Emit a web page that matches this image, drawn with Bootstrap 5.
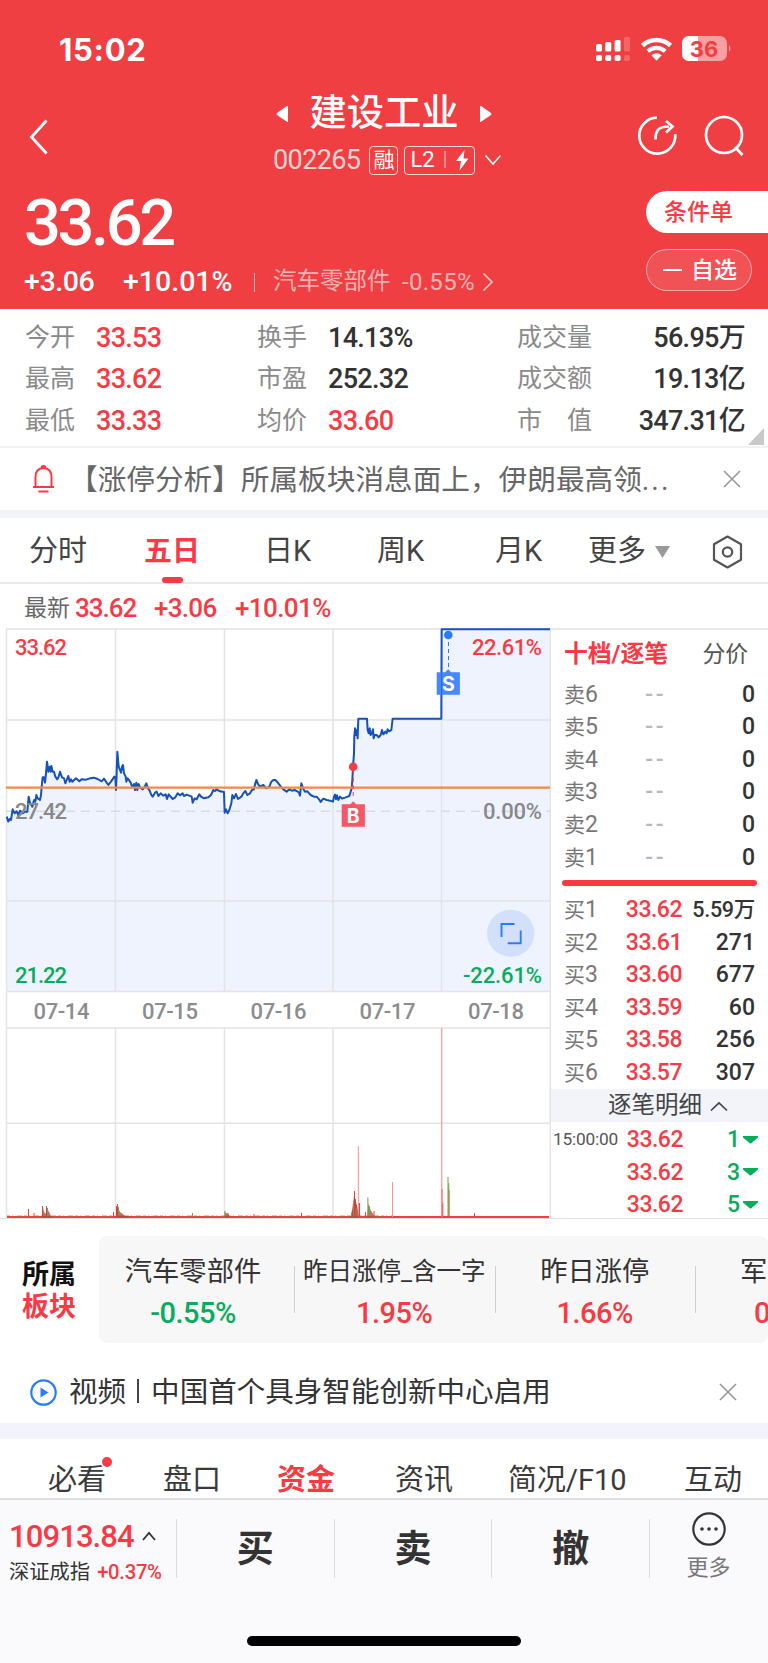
<!DOCTYPE html>
<html lang="zh-CN">
<head>
<meta charset="utf-8">
<meta name="viewport" content="width=device-width, initial-scale=1">
<title>建设工业 002265</title>
<link href="https://cdn.jsdelivr.net/npm/bootstrap@5.3.0/dist/css/bootstrap.min.css" rel="stylesheet">
<style>
  :root{--up:#f93a44;--down:#08ac5c;--ink:#333;--hero:#f03f42}
  body{width:768px;height:1663px;overflow:hidden;background:#fff;color:var(--ink);font-family:Roboto,"Noto Sans CJK SC",sans-serif;line-height:1}
  svg{display:block;flex:none}
  .up{color:var(--up)} .down{color:var(--down)}
  .nw{white-space:nowrap}
  .md{font-weight:500}
  /* header */
  .hero{background:var(--hero);color:#fff;height:309px}
  .status{height:90px;padding:8px 36px 0 59px}
  .clock{font:700 31px/1 Inter,sans-serif;letter-spacing:.7px}
  .titlebar{height:90px;display:grid;grid-template-columns:258px 1fr 258px}
  .stock{font-size:37.3px;font-weight:500}
  .code{font-size:27px;letter-spacing:-.6px;color:rgba(255,255,255,.78)}
  .tagbox{height:29px;border:1.5px solid rgba(255,255,255,.8);border-radius:4px}
  .price{font-size:65px;font-weight:500;letter-spacing:-3.4px;height:48px;line-height:48px;margin-top:19px;padding-left:24px}
  .change{height:30px;margin-top:20px;padding-left:24px}
  .pill-a{height:42px;width:122px;border-radius:21px 0 0 21px;background:#fff;font-size:23px;padding-left:18px}
  .pill-b{height:42px;width:106px;border:1px solid rgba(255,255,255,.5);background:rgba(255,255,255,.1);border-radius:21px;font-size:23px;padding-left:16px}
  .dim{color:rgba(255,255,255,.62)}
  /* statistics */
  .stats{height:139px;padding-top:9px;position:relative;border-bottom:2px solid #f0f1f3}
  .stat-row{height:41.3px;display:grid;grid-template-columns:71px 161px 71px 189px 110px 118px;padding-left:25px;align-items:center;font-size:27px}
  .stat-row span:nth-child(odd){font-size:25px;color:#8a8a8a;position:relative;top:-1px}
  .stat-row span:nth-child(even){font-weight:500;letter-spacing:-.7px}
  .stat-row span:last-child{text-align:right}
  .corner{position:absolute;right:4px;bottom:1px}
  .notice{height:62px;padding:0 27px 0 32px;color:#666}
  .band{background:#f2f4f9}
  .tabs{height:66px;display:grid;grid-template-columns:115px 120px 113px 118px 93px 67px 57px 55px;padding:3px 0 0 29px;align-items:center;font-size:29px;border-bottom:2px solid #eaeaea;color:#444}
  .tabs .on{position:relative;color:var(--up);font-weight:700;font-size:28px}
  .tabs .on::after{content:"";position:absolute;left:18px;top:39px;width:21px;height:6px;border-radius:3px;background:var(--up)}
  .latest{height:44px;padding:4px 0 0 24px;font-size:26px}
  /* chart and order book */
  .market{height:590px}
  .plot{width:551px}
  .book{width:217px;border-top:2px solid #eaeaea}
  .book-head{height:48px;padding:2px 20px 0 13px;font-size:22.8px}
  .book-head b{font-size:23.8px}
  .level{height:32.55px;display:grid;grid-template-columns:48px 70px 1fr;padding:0 13px;align-items:center;font-size:23px;font-weight:500}
  .level span:nth-child(1){color:#777;font-weight:400;font-size:21px}
  .level span:nth-child(1) b{font-weight:400;font-size:23px}
  .level span:nth-child(2){text-align:right;letter-spacing:-.5px}
  .level span:nth-child(3){text-align:right}
  .level .nil{color:#b3bac4;padding-right:16px;letter-spacing:2.5px!important}
  .sep{height:6px;margin:7px 11px 7px;border-radius:3px;background:var(--up)}
  .detail{height:33px;font-size:23.5px;background:#f2f4f9;color:#444}
  .tick{height:32.5px;display:grid;grid-template-columns:65px 65px 1fr 18px;padding:0 10px 0 2px;align-items:center;font-size:23px;font-weight:500}
  .tick span:nth-child(1){font-size:17.3px;font-weight:400;color:#555;letter-spacing:-.2px}
  .tick span:nth-child(2){text-align:right;letter-spacing:-.5px}
  /* sectors */
  .sectors{height:125px;padding-top:17px}
  .sec-title{width:99px;padding:5px 0 0 22px;font-size:27px;font-weight:700;line-height:32px}
  .sec-card{height:107px;width:669px;background:#f7f7f7;border-radius:8px;overflow:hidden;padding-top:21px}
  .sec{width:200.5px;flex:none;text-align:center;position:relative}
  .sec:first-child{width:195px;padding-right:7px}
  .sec + .sec::before{content:"";position:absolute;left:0;top:9px;height:47px;width:1px;background:#cfcfcf}
  .sec div{height:30px;line-height:30px;font-size:27.3px;white-space:nowrap}
  .sec div + div{margin-top:11px;font-size:29px;font-weight:500;letter-spacing:-.5px}
  .video{height:80px;padding:18px 31px 0 30px}
  .subnav{height:59px;display:grid;grid-template-columns:115px 114px 118px 113px 176px 80px;padding:23px 0 0 48px;font-size:29px;line-height:36px;color:#3a3a3a}
  .subnav .fresh{position:relative}
  .subnav .fresh::after{content:"";position:absolute;left:54px;top:-5px;width:10px;height:10px;border-radius:50%;background:var(--up)}
  .dock{height:165px;background:#fafafc;border-top:2px solid #dedede;position:relative}
  .dock-row{height:96px}
  .trade{width:157.7px;height:59px;border-left:1px solid #dcdcde;font-size:37px;font-weight:700;align-self:center}
  .trade span{position:relative;top:1px}
  .trade-more{width:118px;font-size:22px;font-weight:400;color:#777}
  .idx{width:176px;padding:22px 0 0 9px}
  .home{width:274px;height:10px;border-radius:5px;background:#000;margin:40px auto 0 247px}
</style>
</head>
<body>
<header class="hero">
  <div class="status d-flex align-items-center justify-content-between">
    <span class="clock">15:02</span>
    <div class="d-flex align-items-center">
      <svg width="34" height="26" viewBox="0 0 34 26" fill="#fff"><rect x="0" y="8" width="6" height="7.500" rx="1.500"/><rect x="9.300" y="6" width="6" height="9.500" rx="1.500"/><rect x="18.600" y="4" width="6" height="11.500" rx="1.500"/><rect x="28" y="1" width="6" height="14.500" rx="1.500" opacity=".2"/><rect x="0" y="19" width="6" height="6" rx="1.800"/><rect x="9.300" y="19" width="6" height="6" rx="1.800"/><rect x="18.600" y="19" width="6" height="6" rx="1.800"/><rect x="28" y="19" width="6" height="6" rx="1.800" opacity=".2"/></svg>
      <svg style="margin-left:10px" width="34" height="26" viewBox="0 0 34 26" fill="none" stroke="#fff"><path d="M2.500 9.500a20.500 20.500 0 0 1 28 0" stroke-width="4.600"/><path d="M7.800 15.200a13 13 0 0 1 17.400 0" stroke-width="4.200"/><path d="M11.400 19.200a8 8 0 0 1 10.200 0L16.500 24.800z" fill="#fff" stroke="none"/></svg>
      <svg class="ms-2" width="50" height="26" viewBox="0 0 50 26"><defs><clipPath id="bt"><rect y="0" width="45" height="25" rx="7"/></clipPath></defs><g clip-path="url(#bt)"><rect width="45" height="25" fill="#f8a0a1"/><rect width="16" height="25" fill="#fff"/></g><path d="M47 9q3 3.500 0 7z" fill="#f8a0a1"/><text x="22" y="20.500" font-family="Inter" font-weight="700" font-size="22" text-anchor="middle" fill="#f03f42">36</text></svg>
    </div>
  </div>
  <div class="titlebar">
    <div class="ps-4 pt-4"><svg class="mt-1" width="30" height="40" viewBox="-6 -4 30 40"><path d="M16.500 0L1.500 16.500l15 16.500" transform="translate(0 -1.500)" fill="none" stroke="#fff" stroke-width="2.800"/></svg></div>
    <div class="text-center">
      <div class="d-flex align-items-center justify-content-center" style="height:47px">
        <svg width="13" height="18"><path d="M12 1.500v15q0 1-1 .3L1 10q-1-1 0-2L11 1q1-.6 1 .5z" fill="#fff"/></svg>
        <span class="stock nw mx-3 px-1">建设工业</span>
        <svg width="13" height="18"><path d="M1 1.500v15q0 1 1 .3L12 10q1-1 0-2L2 1q-1-.6-1 .5z" fill="#fff"/></svg>
      </div>
      <div class="d-flex align-items-center" style="height:44px;padding:2px 0 0 15px">
        <span class="code">002265</span>
        <span class="tagbox d-flex align-items-center justify-content-center" style="width:29px;font-size:21px;margin-left:9px">融</span>
        <span class="tagbox d-flex align-items-center" style="width:71px;margin-left:6px;padding-left:5px;font-size:22px">L2
          <svg style="margin-left:9px" width="28" height="22"><path d="M1 2v17" stroke="#fff" opacity=".8"/><path d="M20.500 1L12 12h5l-1.500 9.500 9-12h-5z" fill="#fff"/></svg></span>
        <svg style="margin-left:9px" width="18" height="12"><path d="M1.500 1.500L9 10l7.500-8.500" fill="none" stroke="#fff" stroke-width="1.600"/></svg>
      </div>
    </div>
    <div class="d-flex" style="padding:25px 0 0 126px;gap:26px">
      <svg width="42" height="42" viewBox="0 0 42 42" fill="none" stroke="#fff" stroke-width="2.700"><path d="M21 2.600a18 18 0 1 0 18.200 16.500"/><path d="M19.500 24.500C19.500 14 24 11.500 33 11.500M30 6l6.500 5.500-6.500 6"/></svg>
      <svg width="42" height="42" viewBox="0 0 42 42" fill="none" stroke="#fff" stroke-width="2.700"><circle cx="20" cy="20" r="18"/><path d="M31 32l7.500 8"/></svg>
    </div>
  </div>
  <div class="d-flex justify-content-between">
    <div>
      <div class="price">33.62</div>
      <div class="change d-flex align-items-center nw">
        <span class="md" style="font-size:28.500px;letter-spacing:-.4px;width:99px">+3.06</span>
        <span class="md" style="font-size:28.500px;width:131px">+10.01%</span>
        <span style="width:19px;height:19px;border-left:1px solid rgba(255,255,255,.55)"></span>
        <span class="dim" style="font-size:23.500px;width:129px">汽车零部件</span>
        <span class="dim" style="font-size:24px;letter-spacing:.3px">-0.55%</span>
        <svg style="margin-left:7px" width="12" height="20"><path d="M1.500 1.500L10 10 1.500 18.500" fill="none" stroke="#fff" opacity=".7" stroke-width="1.700"/></svg>
      </div>
    </div>
    <div class="md" style="width:122px;padding-top:11px">
      <div class="pill-a up d-flex align-items-center">条件单</div>
      <div class="pill-b d-flex align-items-center" style="margin-top:16px"><i style="width:19px;height:2px;background:#fff;margin-right:9px"></i>自选</div>
    </div>
  </div>
</header>

<section class="stats">
  <div class="stat-row"><span>今开</span><span class="up">33.53</span><span>换手</span><span>14.13%</span><span>成交量</span><span>56.95万</span></div>
  <div class="stat-row"><span>最高</span><span class="up">33.62</span><span>市盈</span><span>252.32</span><span>成交额</span><span>19.13亿</span></div>
  <div class="stat-row"><span>最低</span><span class="up">33.33</span><span>均价</span><span class="up">33.60</span><span>市　值</span><span>347.31亿</span></div>
  <svg class="corner" width="16" height="17"><path d="M16 0v17H0z" fill="#c9c9c9"/></svg>
</section>

<section class="notice d-flex align-items-center">
  <svg width="23" height="28" viewBox="0 0 23 28" fill="none" stroke="#f93a44" stroke-width="2"><path d="M1 22h21M3.500 22V12q0-8.500 8-9 8 .5 8 9v10M9.500 3a2 2 0 0 1 4 0M6.500 26.500h10"/></svg>
  <span class="nw" style="font-size:28.650px;margin-left:14px;width:654px;padding-top:3px">【涨停分析】所属板块消息面上，伊朗最高领<span style="letter-spacing:2px">...</span></span>
  <svg width="18" height="18" stroke="#999" stroke-width="1.700"><path d="M1 1l16 16M17 1L1 17"/></svg>
</section>
<div class="band" style="height:8px"></div>

<nav class="tabs">
  <span>分时</span><span class="on">五日</span><span>日K</span><span>周K</span><span>月K</span><span>更多</span>
  <svg width="15" height="12"><path d="M0 0h15L7.500 12z" fill="#999"/></svg>
  <svg width="31" height="34" viewBox="0 0 31 34" fill="none" stroke="#555" stroke-width="2.200"><path d="M15.500 1.500L29 9.300v15.400l-13.500 7.800L2 24.700V9.300z" stroke-linejoin="round"/><circle cx="15.500" cy="17" r="4.700"/></svg>
</nav>
<div class="latest d-flex align-items-center md up nw">
  <span style="font-size:23px;width:51px;color:#666;font-weight:400">最新</span><span style="width:79px;letter-spacing:-1px">33.62</span><span style="width:81px;letter-spacing:-.7px">+3.06</span><span style="letter-spacing:-.6px">+10.01%</span>
</div>

<main class="market d-flex">
  <svg class="plot" height="590" viewBox="0 628 551 590" font-family="Roboto">
    <defs><path id="px" d="M20 590L25 605 29 597 33 600 38 568 44 580 50 574 55 585 60 572 68 580 75 575 82 575 86 530 90 548 97 560 102 540 106 545 109 525 113 535 120 540 123 525 125 500 128 472 132 472 135 488 138 460 141 425 145 455 149 440 152 455 154 438 158 455 162 455 166 470 172 478 176 470 180 455 186 472 192 475 196 490 200 480 205 468 209 485 213 478 217 485 228 475 238 484 245 478 258 479 270 475 282 473 293 477 305 484 312 476 320 488 325 495 333 485 343 470 346 472 348 510 350 460 352 395 356 440 360 450 363 458 366 440 369 435 372 460 377 470 379 485 383 475 388 482 392 488 397 502 402 492 405 510 409 488 412 510 416 492 420 502 428 508 434 500 439 490 444 505 449 512 454 525 458 530 465 518 470 515 475 528 482 520 490 527 497 523 501 537 506 523 512 530 518 537 526 532 533 520 540 526 548 520 552 528 560 524 568 527 575 530 578 548 584 535 590 538 598 523 603 530 612 535 625 532 633 525 640 510 645 513 650 508 660 514 672 516 674 578 678 568 683 580 688 570 694 550 697 525 702 535 708 522 714 537 724 530 730 520 736 513 742 525 750 520 756 510 762 508 766 490 769 480 774 492 780 500 790 495 798 505 808 500 814 485 820 480 826 480 832 486 838 494 845 503 850 508 860 515 868 508 876 512 884 510 892 514 897 518 900 527 904 490 909 505 915 515 922 514 932 525 942 530 950 530 957 538 962 546 970 536 980 540 990 542 999 545 1002 530 1005 524 1008 538 1011 526 1015 540 1020 530 1026 536 1035 533 1043 530 1048 528 1052 515 1055 505 1057 480 1059 440 1062 400 1063 350 1065 325 1068 345 1071 330 1073 355 1075 296 1101 296 1103 330 1106 340 1109 325 1112 345 1116 340 1119 328 1121 355 1124 345 1130 345 1136 352 1142 345 1146 330 1150 343 1156 335 1160 340 1163 328 1168 334 1174 330 1178 296 1324 296 1325 28 1650 28"/>
    <clipPath id="fillclip"><path d="M20 1114V590L25 605 38 568 60 574 82 575 86 530 97 560 109 525 120 540 128 472 135 488 141 425 162 455 176 470 196 490 228 478 282 473 305 484 325 495 346 472 352 395 363 458 369 435 379 485 397 502 439 490 458 530 501 530 533 520 578 548 598 523 625 532 650 508 672 516 674 578 683 580 697 525 714 537 742 525 769 480 798 505 820 480 850 508 892 514 904 490 932 525 962 546 999 545 1043 530 1055 505 1059 440 1065 325 1075 296 1101 296 1106 340 1136 352 1174 330 1178 296 1324 296 1325 28 1650 28V1114z"/></clipPath></defs>
    <g transform="translate(0 620) scale(.33333)"><rect width="1660" height="1200" fill="#eff3fe" clip-path="url(#fillclip)"/></g>
    <g stroke="#e4e4e4" stroke-width="1.500" fill="none">
      <path d="M6 629H551M6 720H551M6 901H551M6 991.500H551M6 1028H551M6 1123.300H551"/>
      <path d="M6.500 629V1218M115.500 629V991M224.500 629V991M333 629V991M441.500 629V991M550.300 629V1218M115.500 1028V1218M224.500 1028V1218M333 1028V1218M441.500 1028V1218"/>
      <path d="M6 811.200H551" stroke="#d3dce8" stroke-dasharray="9 6"/>
    </g>
    <use href="#px" transform="translate(0 620) scale(.33333)" fill="none" stroke="#1551bb" stroke-width="6" stroke-linejoin="round"/>
    <path d="M6 787.600H550" stroke="#f9873f" stroke-width="2.300"/>
    <g font-size="22" font-weight="500">
      <text x="15" y="654.500" fill="#f93a44" textLength="52">33.62</text>
      <text x="15" y="819" fill="#888" textLength="52">27.42</text>
      <text x="15" y="982.500" fill="#08ac5c" textLength="52">21.22</text>
      <text x="472" y="654.500" fill="#f93a44" textLength="70">22.61%</text>
      <text x="483" y="819" fill="#888" textLength="59">0.00%</text>
      <text x="463" y="982.500" fill="#08ac5c" textLength="79">-22.61%</text>
      <g fill="#8c8c8c"><text x="33.500" y="1018.500" textLength="56">07-14</text><text x="142" y="1018.500" textLength="56">07-15</text><text x="250.500" y="1018.500" textLength="56">07-16</text><text x="359.500" y="1018.500" textLength="56">07-17</text><text x="468" y="1018.500" textLength="56">07-18</text></g>
    </g>
    <path d="M353.200 771V799" stroke="#f93a44" stroke-dasharray="4 3"/><circle cx="353.200" cy="766.700" r="4.300" fill="#f93a44"/>
    <path d="M341.700 804.300h8.500l3-3 3 3h8.700v22.400h-23.200z" fill="#f75765"/><text x="353.300" y="822.500" font-family="Inter" font-size="19.500" font-weight="700" fill="#fff" text-anchor="middle">B</text>
    <path d="M448.500 642V668" stroke="#2b7bff" stroke-dasharray="4 3"/><circle cx="448.300" cy="635" r="4.300" fill="#2b7bff"/>
    <path d="M436.700 672.300h8.500l3-3 3 3h8.700v22.400h-23.200z" fill="#4588ff"/><path d="M441.600 672.300v22.400" stroke="#1e66ee"/><text x="448.300" y="690.500" font-family="Inter" font-size="19.500" font-weight="700" fill="#fff" text-anchor="middle">S</text>
    <circle cx="510.700" cy="933.300" r="23.600" fill="#d3e0fc"/>
    <path d="M514.500 924h-13v13M520.700 930.500v12.700h-13" fill="none" stroke="#2b7bff" stroke-width="1.900"/>
    <path d="M7 1217H549" stroke="#f93a44" stroke-width="2"/>
    <path d="M7 1216H392" stroke="#6c8a35" stroke-width="1" stroke-dasharray="3 2 1 4 5 2" opacity=".75"/>
    <g stroke="#f93a44" fill="none" stroke-width="1">
      <path d="M28.500 1217V1209M34 1217V1213M42.500 1217V1206M46.500 1217V1206M113.500 1217V1212M116.500 1217V1206M117.500 1217V1204M228 1217V1213M254 1217V1214M301.500 1217V1213M352.500 1217V1210M354.500 1217V1191M355.500 1217V1199M356.500 1217V1205M359.500 1217V1203M365.500 1217V1212M374 1217V1211M442 1217V1189M442.800 1217V1203M449 1217V1190M474.500 1217V1213"/>
      <path d="M358.300 1217V1146M392.500 1217V1182M441.800 1217V1028" stroke="#fa8f91"/>
    </g>
    <path d="M28.500 1218v-4M41.500 1218l1.500-10 1 4 1.500 2 1.500-6 3 6 2 4zM116 1218v-9l2-1 2 4 4 3 8 3zM225 1218v-6l4 3v3zM350 1218l2-8 2-14 2 6 2 8 1 8zM367 1218l1.500-15 2 7 4 6z" fill="#b54a3a" opacity=".8"/>
    <path d="M47.500 1216V1208M118.500 1216V1207M192.500 1216V1213M224.800 1216V1211M356 1216V1208M367.900 1216V1197.500M369.500 1216V1206M448 1216V1177M448.800 1216V1183" stroke="#66a54a" stroke-width="1"/>
  </svg>
  <aside class="book">
    <div class="book-head d-flex align-items-center justify-content-between nw"><b class="up">十档/逐笔</b><span style="color:#555">分价</span></div>
    <div class="level"><span>卖<b>6</b></span><span class="nil">--</span><span>0</span></div>
    <div class="level"><span>卖<b>5</b></span><span class="nil">--</span><span>0</span></div>
    <div class="level"><span>卖<b>4</b></span><span class="nil">--</span><span>0</span></div>
    <div class="level"><span>卖<b>3</b></span><span class="nil">--</span><span>0</span></div>
    <div class="level"><span>卖<b>2</b></span><span class="nil">--</span><span>0</span></div>
    <div class="level"><span>卖<b>1</b></span><span class="nil">--</span><span>0</span></div>
    <div class="sep"></div>
    <div class="level"><span>买<b>1</b></span><span class="up">33.62</span><span class="nw" style="font-size:21.500px;letter-spacing:-.3px">5.59万</span></div>
    <div class="level"><span>买<b>2</b></span><span class="up">33.61</span><span>271</span></div>
    <div class="level"><span>买<b>3</b></span><span class="up">33.60</span><span>677</span></div>
    <div class="level"><span>买<b>4</b></span><span class="up">33.59</span><span>60</span></div>
    <div class="level"><span>买<b>5</b></span><span class="up">33.58</span><span>256</span></div>
    <div class="level"><span>买<b>6</b></span><span class="up">33.57</span><span>307</span></div>
    <div class="detail d-flex align-items-center justify-content-center" style="padding:2px 0 0 17px">逐笔明细<svg style="margin-left:8px" width="18" height="11"><path d="M1 9.500l8-7.500 8 7.500" fill="none" stroke="#444" stroke-width="1.700"/></svg></div>
    <div style="height:2px"></div>
    <div class="tick"><span>15:00:00</span><span class="up">33.62</span><span class="down text-end">1</span><svg class="ms-auto" width="15" height="8"><path d="M0 0h15v1.500L8.500 7q-1 1-2 0L0 1.500z" fill="#08ac5c"/></svg></div>
    <div class="tick"><span></span><span class="up">33.62</span><span class="down text-end">3</span><svg class="ms-auto" width="15" height="8"><path d="M0 0h15v1.500L8.500 7q-1 1-2 0L0 1.500z" fill="#08ac5c"/></svg></div>
    <div class="tick"><span></span><span class="up">33.62</span><span class="down text-end">5</span><svg class="ms-auto" width="15" height="8"><path d="M0 0h15v1.500L8.500 7q-1 1-2 0L0 1.500z" fill="#08ac5c"/></svg></div>
  </aside>
</main>

<section class="sectors d-flex border-top">
  <div class="sec-title"><div style="color:#111;margin-top:18px">所属</div><div class="up">板块</div></div>
  <div class="sec-card d-flex">
    <div class="sec"><div>汽车零部件</div><div class="down">-0.55%</div></div>
    <div class="sec"><div style="font-size:24.500px">昨日涨停_含一字</div><div class="up">1.95%</div></div>
    <div class="sec"><div>昨日涨停</div><div class="up">1.66%</div></div>
    <div class="sec text-start" style="width:73px;padding-left:45px"><div style="width:27px">军</div><div class="up" style="padding-left:14px">0</div></div>
  </div>
</section>
<section class="video d-flex align-items-center">
  <svg width="27" height="27" viewBox="0 0 27 27"><circle cx="13.500" cy="13.500" r="12.200" fill="none" stroke="#2b7bff" stroke-width="2.200"/><path d="M10.500 8.500l8 5-8 5z" fill="#2b7bff"/></svg>
  <span class="nw" style="font-size:28.550px;margin-left:12px;width:650px;padding-top:2px">视频<span class="d-inline-block" style="width:2px;height:24px;background:#444;margin:0 12px -1px 11px"></span>中国首个具身智能创新中心启用</span>
  <svg width="18" height="18" stroke="#999" stroke-width="1.700"><path d="M1 1l16 16M17 1L1 17"/></svg>
</section>
<div class="band" style="height:16px"></div>
<nav class="subnav nw">
  <span class="fresh">必看</span><span>盘口</span><span class="up fw-bold">资金</span><span>资讯</span><span>简况/F10</span><span>互动</span>
</nav>

<footer class="dock">
  <div class="dock-row d-flex">
    <div class="idx nw">
      <div class="d-flex align-items-center up" style="height:28px"><span class="md" style="font-size:31px;letter-spacing:-.9px">10913.84</span><svg style="margin-left:8px" width="14" height="10"><path d="M1 9l6-7 6 7" fill="none" stroke="#333" stroke-width="1.800"/></svg></div>
      <div class="d-flex align-items-center" style="height:24px;margin-top:10px;font-size:20.300px">深证成指<span class="up md" style="margin-left:7px;letter-spacing:-.3px">+0.37%</span></div>
    </div>
    <div class="trade d-flex align-items-center justify-content-center"><span>买</span></div>
    <div class="trade d-flex align-items-center justify-content-center"><span>卖</span></div>
    <div class="trade d-flex align-items-center justify-content-center"><span>撤</span></div>
    <div class="trade trade-more d-flex flex-column align-items-center flex-shrink-1"><svg style="margin-top:-7px" width="34" height="34"><circle cx="17" cy="17" r="15.700" fill="none" stroke="#333" stroke-width="2.200"/><g fill="#333"><circle cx="10" cy="17" r="1.800"/><circle cx="17" cy="17" r="1.800"/><circle cx="24" cy="17" r="1.800"/></g></svg><span style="margin-top:10px">更多</span></div>
  </div>
  <div class="home"></div>
</footer>
<script src="https://cdn.jsdelivr.net/npm/bootstrap@5.3.0/dist/js/bootstrap.bundle.min.js"></script>
</body>
</html>
